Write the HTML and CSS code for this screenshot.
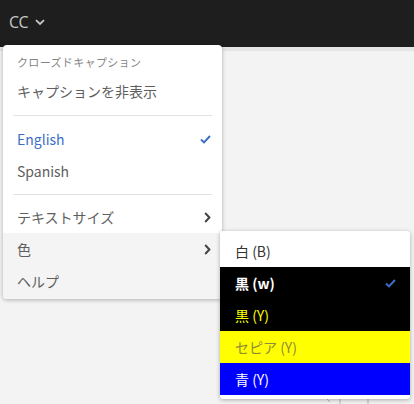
FILE: index.html
```html
<!DOCTYPE html>
<html lang="ja">
<head>
<meta charset="utf-8">
<link rel="stylesheet" href="styles.css">
</head>
<body>
<header class="topbar">
  <button class="cc-btn">CC
    <svg class="cc-chev" width="10" height="7" viewBox="0 0 10 7"><path d="M1 1.2 L5 5 L9 1.2" fill="none" stroke="#c8c8c8" stroke-width="1.8"/></svg>
  </button>
</header>
<div class="band"></div>
<main class="stage">
  <svg class="bg-deco" width="60" height="10" viewBox="0 0 60 10"><path d="M2 0 L10 8 M20 0 V10 M48 0 V10" stroke="#b5b5b5" stroke-width="1" fill="none"/></svg>
</main>

<div class="menu">
  <div class="menu-header">クローズドキャプション</div>
  <div class="menu-item">キャプションを非表示</div>
  <div class="menu-sep"></div>
  <div class="menu-item selected">English
    <svg class="check" width="11" height="9" viewBox="0 0 11 9"><path d="M1 4.6 L4 7.4 L10 1" fill="none" stroke="#3a6fc4" stroke-width="2"/></svg>
  </div>
  <div class="menu-item">Spanish</div>
  <div class="menu-sep sep2"></div>
  <div class="menu-item">テキストサイズ
    <svg class="chev" width="7" height="11" viewBox="0 0 7 11"><path d="M1.2 1 L5.4 5.5 L1.2 10" fill="none" stroke="#444" stroke-width="2"/></svg>
  </div>
  <div class="menu-lower">
    <div class="menu-item">色
      <svg class="chev" width="7" height="11" viewBox="0 0 7 11"><path d="M1.2 1 L5.4 5.5 L1.2 10" fill="none" stroke="#444" stroke-width="2"/></svg>
    </div>
    <div class="menu-item">ヘルプ</div>
  </div>
</div>

<div class="submenu">
  <div class="sub-item c-white">白 (B)</div>
  <div class="sub-item c-black">黒 (w)
    <svg class="check" width="11" height="9" viewBox="0 0 11 9"><path d="M1 4.6 L4 7.4 L10 1" fill="none" stroke="#3a6fc4" stroke-width="2"/></svg>
  </div>
  <div class="sub-item c-blacky">黒 (Y)</div>
  <div class="sub-item c-sepia">セピア (Y)</div>
  <div class="sub-item c-blue">青 (Y)</div>
</div>
</body>
</html>
```

FILE: styles.css
```css
* { box-sizing: border-box; }
html, body {
  margin: 0;
  padding: 0;
  width: 414px;
  height: 404px;
  overflow: hidden;
  background: #f3f3f3;
  font-family: "Noto Sans CJK JP", "Noto Sans", sans-serif;
}
.topbar {
  height: 47px;
  background: #1e1e1e;
  display: flex;
  align-items: center;
  padding-left: 9px;
}
.cc-btn {
  background: none;
  border: 0;
  padding: 0;
  display: flex;
  align-items: center;
  gap: 7px;
  color: #c8c8c8;
  font-family: "Open Sans", "Noto Sans", sans-serif;
  font-size: 16px;
  font-weight: 400;
  letter-spacing: -0.5px;
  margin-top: -4px;
}
.cc-chev { margin-top: 2px; }
.band {
  height: 4px;
  background: #e4e4e4;
}
.stage {
  position: relative;
  height: 353px;
}
.bg-deco {
  position: absolute;
  left: 320px;
  bottom: 0;
}
.menu {
  position: absolute;
  left: 3px;
  top: 45px;
  width: 219px;
  background: #fff;
  border-radius: 4px;
  box-shadow: 0 1px 4px rgba(0,0,0,0.28);
  padding-top: 4px;
  overflow: hidden;
}
.menu-header {
  height: 26px;
  display: flex;
  align-items: center;
  padding-left: 14px;
  font-size: 11px;
  letter-spacing: 0.35px;
  color: #858585;
}
.menu-item {
  height: 32px;
  display: flex;
  align-items: center;
  justify-content: space-between;
  padding: 0 11px 0 14px;
  font-size: 14px;
  color: #5e5e5e;
}
.menu-item.selected { color: #3b6fc6; }
.menu-sep {
  height: 16px;
  display: flex;
  align-items: center;
  padding: 0 10px;
}
.menu-sep::before {
  content: "";
  flex: 1;
  height: 1px;
  background: #e2e2e2;
}
.menu-sep.sep2 { height: 14px; }
.menu-lower {
  background: #f4f4f4;
  padding-bottom: 2px;
}
.submenu {
  position: absolute;
  left: 220px;
  top: 231px;
  width: 190px;
  background: #fff;
  border-radius: 3px;
  box-shadow: 0 1px 4px rgba(0,0,0,0.3);
  padding: 4px 0;
}
.sub-item {
  height: 32px;
  display: flex;
  align-items: center;
  justify-content: space-between;
  padding: 0 14px 0 15px;
  font-size: 14px;
}
.c-white { color: #333; }
.c-black { background: #000; color: #fff; font-weight: 600; }
.c-blacky { background: #000; color: #ffff00; }
.c-sepia { background: #ffff00; color: #8f8a3a; }
.c-blue { background: #0000ff; color: #fff; }
```
